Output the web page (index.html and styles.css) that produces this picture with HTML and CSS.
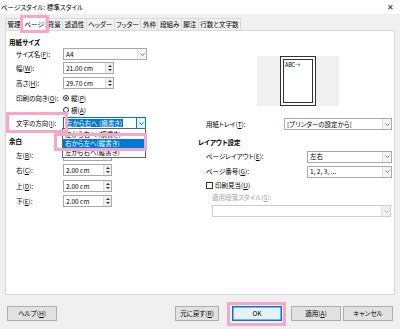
FILE: index.html
```html
<!DOCTYPE html>
<html lang="ja">
<head>
<meta charset="utf-8">
<title>ページスタイル: 標準スタイル</title>
<link rel="stylesheet" href="styles.css">
</head>
<body>
<div class="titlebar"><span class="ttl">ページスタイル: 標準スタイル</span><span class="close">✕</span></div>
<div class="tabs">
  <div class="tab">管理</div>
  <div class="tab active hl hl-tab">ページ</div>
  <div class="tab">背景</div>
  <div class="tab">透過性</div>
  <div class="tab">ヘッダー</div>
  <div class="tab">フッター</div>
  <div class="tab">外枠</div>
  <div class="tab">段組み</div>
  <div class="tab">脚注</div>
  <div class="tab">行数と文字数</div>
</div>
<div class="panel">
  <div class="col left">
    <div class="head">用紙サイズ</div>
    <div class="row h14"><div class="lbl">サイズ名(<u>F</u>):</div><div class="sel w84"><span class="val">A4</span><span class="dd"><svg width="5" height="3" viewBox="0 0 5 3"><polyline points="0.5,0.5 2.5,2.5 4.5,0.5" fill="none" stroke="#555" stroke-width="0.8"/></svg></span></div></div>
    <div class="row h15"><div class="lbl">幅(<u>W</u>):</div><div class="spin w51"><span class="val">21.00 cm</span><span class="sb"><i class="up"></i><i class="dn"></i></span></div></div>
    <div class="row h15"><div class="lbl">高さ(<u>H</u>):</div><div class="spin w51"><span class="val">29.70 cm</span><span class="sb"><i class="up"></i><i class="dn"></i></span></div></div>
    <div class="row h13"><div class="lbl">印刷の向き(<u>O</u>):</div><span class="radio on"></span><span class="opt">縦(<u>P</u>)</span></div>
    <div class="row h12 r0"><div class="lbl"></div><span class="radio"></span><span class="opt">横(<u>A</u>)</span></div>
    <div class="row h14 over"><div class="lbl hl hl-lbl">文字の方向(<u>I</u>):</div>
      <div class="sel w83 focus"><span class="val"><span class="picked">左から右へ (横書き)</span></span><span class="dd dd-focus"><svg width="5" height="3" viewBox="0 0 5 3"><polyline points="0.5,0.5 2.5,2.5 4.5,0.5" fill="none" stroke="#333" stroke-width="0.8"/></svg></span>
        <div class="list">
          <div class="item">左から右へ (横書き)</div>
          <div class="item cur hl hl-item">右から左へ(縦書き)</div>
          <div class="item">左から右へ(縦書き)</div>
        </div>
      </div>
    </div>
    <div class="head head2">余白</div>
    <div class="row h15"><div class="lbl">左(<u>B</u>):</div><div class="spin w49"><span class="val covered">2.00 cm</span><span class="sb"><i class="up"></i><i class="dn"></i></span></div></div>
    <div class="row h16"><div class="lbl">右(<u>C</u>):</div><div class="spin w49"><span class="val">2.00 cm</span><span class="sb"><i class="up"></i><i class="dn"></i></span></div></div>
    <div class="row h15"><div class="lbl">上(<u>D</u>):</div><div class="spin w49"><span class="val">2.00 cm</span><span class="sb"><i class="up"></i><i class="dn"></i></span></div></div>
    <div class="row h15"><div class="lbl">下(<u>E</u>):</div><div class="spin w49"><span class="val">2.00 cm</span><span class="sb"><i class="up"></i><i class="dn"></i></span></div></div>
  </div>
  <div class="col right">
    <div class="preview"><div class="page"><div class="page-in">ABC→</div></div></div>
    <div class="rrow tray"><div class="rlbl">用紙トレイ(<u>T</u>):</div><div class="sel w108"><span class="val">[プリンターの設定から]</span><span class="dd"><svg width="5" height="3" viewBox="0 0 5 3"><polyline points="0.5,0.5 2.5,2.5 4.5,0.5" fill="none" stroke="#555" stroke-width="0.8"/></svg></span></div></div>
    <div class="head rhead">レイアウト設定</div>
    <div class="rrow h15"><div class="rlbl">ページレイアウト(<u>E</u>):</div><div class="sel w85"><span class="val">左右</span><span class="dd"><svg width="5" height="3" viewBox="0 0 5 3"><polyline points="0.5,0.5 2.5,2.5 4.5,0.5" fill="none" stroke="#555" stroke-width="0.8"/></svg></span></div></div>
    <div class="rrow h15"><div class="rlbl">ページ番号(<u>G</u>):</div><div class="sel w85"><span class="val">1, 2, 3, ...</span><span class="dd"><svg width="5" height="3" viewBox="0 0 5 3"><polyline points="0.5,0.5 2.5,2.5 4.5,0.5" fill="none" stroke="#555" stroke-width="0.8"/></svg></span></div></div>
    <div class="rrow h12 r0"><span class="check"></span><span class="opt">印刷見当(<u>U</u>)</span></div>
    <div class="rrow h13 r0 sub"><span class="dis">適用段落スタイル(<u>S</u>):</span></div>
    <div class="rrow h14 sub"><div class="sel disabled wfull"><span class="val"></span><span class="dd"><svg width="5" height="3" viewBox="0 0 5 3"><polyline points="0.5,0.5 2.5,2.5 4.5,0.5" fill="none" stroke="#aaa" stroke-width="0.8"/></svg></span></div></div>
  </div>
</div>
<div class="buttons">
  <button class="btn">ヘルプ(<u>H</u>)</button>
  <div class="spacer"></div>
  <button class="btn reset">元に戻す(<u>R</u>)</button>
  <button class="btn ok hl hl-ok">OK</button>
  <button class="btn apply">適用(<u>A</u>)</button>
  <button class="btn">キャンセル</button>
</div>
</body>
</html>
```
FILE: styles.css
```css
* { box-sizing: border-box; }
html, body { margin: 0; padding: 0; }
body {
  width: 400px;
  height: 329px;
  overflow: hidden;
  background: #f0f0f0;
  color: #000;
  font-family: "Noto Sans CJK JP", "Noto Sans", sans-serif;
  font-size: 6.5px;
  line-height: 1;
  font-feature-settings: "palt";
}
u { text-decoration: underline; text-underline-offset: 1px; text-decoration-thickness: 0.5px; }

.titlebar {
  height: 14px;
  background: #fff;
  display: flex;
  justify-content: space-between;
  align-items: center;
  padding: 0 6px 0 1px;
}
.close { font-size: 8px; color: #222; }

.tabs {
  height: 16px;
  display: flex;
  align-items: flex-end;
  padding-left: 5px;
}
.tab {
  height: 12px;
  padding: 0 1.5px;
  display: flex;
  align-items: center;
  justify-content: center;
  border: 1px solid #d9d9d9;
  border-right: none;
  border-bottom: none;
  background: #f0f0f0;
  white-space: nowrap;
}
.tab:last-child { border-right: 1px solid #d9d9d9; }
.tab.active {
  height: 15px;
  margin-bottom: -1px;
  background: #fff;
  border-right: 1px solid #d9d9d9;
  position: relative;
  z-index: 2;
}
.tab.active + .tab { border-left: none; }

.panel {
  margin-left: 5px;
  width: 390px;
  height: 265px;
  background: #fff;
  border: 1px solid #d9d9d9;
  display: grid;
  grid-template-columns: 189px 1fr;
}
.col { display: flex; flex-direction: column; }
.left { padding-top: 6px; }
.head {
  font-weight: bold;
  padding-left: 3px;
  height: 10px;
  line-height: 10px;
}
.head2 { margin-top: 5px; height: 13px; line-height: 13px; }

.row {
  display: flex;
  align-items: flex-start;
  padding-left: 10px;
  position: relative;
}
.row.over { z-index: 5; }
.row > * { margin-top: 1px; }
.row.r0 > * { margin-top: 0; }
.h12 { height: 12px; }
.h13 { height: 13px; }
.h14 { height: 14px; }
.h15 { height: 15px; }
.h16 { height: 16px; }

.lbl {
  width: 47px;
  height: 12px;
  line-height: 12px;
  white-space: nowrap;
}
.opt { line-height: 12px; white-space: nowrap; }

.sel, .spin {
  height: 12px;
  border: 1px solid #a9a9a9;
  background: #fff;
  display: flex;
  align-items: stretch;
  position: relative;
}
.val {
  flex: 1;
  padding-left: 2px;
  white-space: nowrap;
  overflow: hidden;
  display: flex;
  align-items: center;
}
.val.covered { visibility: hidden; }
.dd {
  width: 9px;
  border-left: 1px solid #dcdcdc;
  background: #f4f4f4;
  display: flex;
  align-items: center;
  justify-content: center;
}
.w84 { width: 84px; }
.w83 { width: 83px; }
.w85 { width: 85px; }
.w108 { width: 108px; }
.w51 { width: 51px; }
.w49 { width: 49px; }
.wfull { width: 179px; }

.sb {
  width: 8px;
  border-left: 1px solid #dcdcdc;
  background: #f0f0f0;
  display: flex;
  flex-direction: column;
  align-items: center;
  justify-content: space-evenly;
}
.up, .dn { display: block; width: 0; height: 0; border-left: 2px solid transparent; border-right: 2px solid transparent; }
.up { border-bottom: 2px solid #333; }
.dn { border-top: 2px solid #333; }

.sel.focus { border-color: #0078d7; }
.picked { background: #0078d7; color: #fff; padding: 1px 1px; margin-left: -1px; }
.dd-focus { background: #e5f1fb; border-left: 1px solid #0078d7; }

.list {
  position: absolute;
  top: 10px;
  left: -2px;
  width: 84px;
  background: #fff;
  border: 1px solid #646464;
  padding-top: 1px;
  z-index: 5;
}
.item {
  height: 9px;
  line-height: 9px;
  padding-left: 2px;
  white-space: nowrap;
}
.item.cur { background: #0078d7; color: #fff; }

.radio {
  width: 6px;
  height: 6px;
  border: 1px solid #333;
  border-radius: 50%;
  align-self: center;
  margin-right: 2px;
  display: flex;
  align-items: center;
  justify-content: center;
}
.row > .radio { margin-top: 1px; }
.row.r0 > .radio { margin-top: 0; }
.radio.on::before {
  content: "";
  width: 2px;
  height: 2px;
  border-radius: 50%;
  background: #222;
}
.check {
  width: 7px;
  height: 7px;
  border: 1px solid #333;
  background: #fff;
  margin-right: 2px;
}

.right { padding-right: 2px; }
.preview {
  margin-top: 25px;
  margin-left: 62px;
  width: 82px;
  height: 50px;
  background: #f0f0f0;
}
.page {
  margin-left: 23px;
  width: 36px;
  height: 50px;
  border: 1px solid #333;
  background: #fff;
  padding: 2px;
}
.page-in {
  height: 100%;
  border: 1px solid #333;
  padding: 3px 0 0 1px;
  font-size: 5.5px;
  letter-spacing: -0.2px;
  white-space: nowrap;
}
.rrow {
  display: flex;
  align-items: center;
  padding-left: 11px;
}
.rrow.tray { margin-top: 11px; height: 14px; }
.rrow .sel { margin-left: auto; }
.rrow .check { margin-right: 2px; }
.rlbl { white-space: nowrap; }
.rhead { margin-top: 4px; height: 14px; line-height: 14px; }
.rrow.sub { padding-left: 17px; }
.dis { color: #a0a0a0; white-space: nowrap; }
.sel.disabled { margin-left: 0; border-color: #cfcfcf; background: #fff; }
.sel.disabled .dd { background: #f0f0f0; border-left-color: #e0e0e0; }

.buttons {
  margin-top: 11px;
  display: flex;
  padding: 0 7px;
}
.spacer { flex: 1; }
.btn {
  width: 50px;
  height: 15px;
  padding: 0;
  border: 1px solid #adadad;
  background: #e1e1e1;
  font: inherit;
  font-size: 6.5px;
  color: #000;
  white-space: nowrap;
}
.btn.reset { width: 44px; margin-right: 13px; }
.btn.ok { border: 1px solid #0078d7; background: #e5f1fb; margin-right: 9px; box-shadow: inset 0 0 0 0.5px #0078d7; }
.btn.apply { margin-right: 2px; }

.hl { position: relative; }
.hl::after {
  content: "";
  position: absolute;
  border: 3px solid #f6a7ca;
  pointer-events: none;
  z-index: 6;
}
.hl-tab::after { top: -2px; bottom: -2px; left: -3px; right: -4px; }
.hl-lbl::after { top: -5px; bottom: -4px; left: -10px; right: -5px; }
.hl-item::after { top: -6px; bottom: -3px; left: -9px; right: -2px; }
.hl-ok::after { top: -5px; bottom: -6px; left: -6px; right: -5px; }
```
